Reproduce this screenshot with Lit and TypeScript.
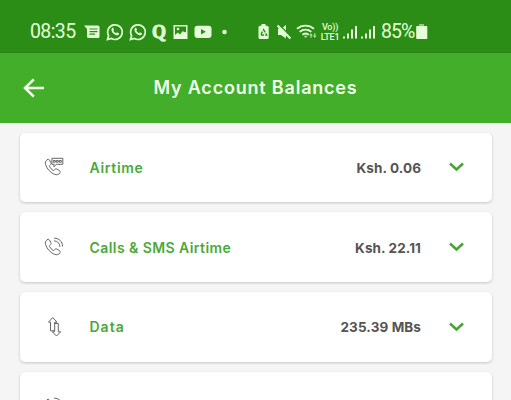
import { LitElement, html, css, svg, nothing } from "lit";
import { customElement } from "lit/decorators.js";
import { styleMap } from "lit/directives/style-map.js";

const phone = svg`<path d="M3.400 2.600C1.600 3.800.9 5.400 1.600 7.600c1.500 4.500 4.600 7.900 8.900 9.700 2.200.9 4.300.4 5.500-1.500.5-.8.3-1.500-.4-2l-2.600-1.700c-.7-.5-1.500-.4-2 .3l-.6.8c-.4.5-.9.5-1.400.2-1.500-1-2.700-2.300-3.500-3.900-.3-.6-.1-1 .4-1.400l.6-.5c.6-.5.8-1.100.4-1.800L5.500 3C5 2.200 4.200 2.100 3.400 2.600Z"/>`;

const rowIcons = {
  chat: svg`${phone}
    <path d="M8.300 1.300h10.500v6h-6.600L10 9.800V7.300H8.300Z" fill="#fff"/>
    <path d="M9.800 3.500h1.500v1.700H9.800Zm3 0h1.500v1.700h-1.500Zm3 0h1.500v1.700h-1.500Z"/>`,
  call: svg`${phone}
    <path d="M10.500 1.200c4.600 0 8 3.300 8.100 8M10.400 3.900c3.200.1 5.400 2.300 5.500 5.500"/>`,
  data: svg`<path d="M8.500.8 4.500 5.200h2v8.600h4.200V5.200h1.900Z"/>
    <path d="M10.700 6.500h3.600v8.300h2.400l-4.200 4.200-4.100-4.200h2V13.800"/>`,
};
type RowIcon = keyof typeof rowIcons;

@customElement("status-bar")
class StatusBar extends LitElement {
  static styles = css`
    :host {
      display: flex;
      align-items: center;
      flex: none;
      height: 53px;
      padding: 11px 0 0 30px;
      box-sizing: border-box;
      background: #2b8d15;
      color: #e4ffd8;
      font: 19.500px/24px Roboto, sans-serif;
      border-bottom: 1px solid #2b8319;
    }
    svg {
      display: block;
      flex: none;
      height: 18px;
      fill: currentColor;
    }
    .line { fill: none; stroke: currentColor; }
    .cut { fill: #2b8d15; }
    .etch { fill: none; stroke: #2b8d15; }
    .time { width: 54px; letter-spacing: -0.6px; white-space: nowrap; }
    .left { display: flex; align-items: center; gap: 6px; width: 174px; }
    .q { font: bold 18px/18px "Liberation Serif", serif; width: 15px; -webkit-text-stroke: 0.9px currentColor; }
    .right { display: flex; align-items: center; }
    .lte {
      display: flex;
      flex-direction: column;
      align-items: center;
      font: 500 9px/10px Roboto, sans-serif;
      width: 22px;
      white-space: nowrap;
      letter-spacing: -0.2px;
    }
    .lte span { display: block; height: 10px; }
    .signal { margin-left: 2px; }
    .pct { width: 35px; margin-left: 4px; letter-spacing: -1px; white-space: nowrap; }
  `;

  private whatsapp() {
    return svg`<path class="line" stroke-width="1.700" d="M1.500 16.600 2.600 12.700a7.300 7.300 0 1 1 2.800 2.800Z"/>
      <path d="M6.100 4.900c.5-.4 1-.3 1.200.2l.6 1.400c.2.4-.5 1-.6 1.300.7 1.300 1.600 2 2.800 2.500.4-.2.800-1.100 1.200-.9l1.500.8c.6.3-.1 1.600-.7 1.900-1.200.6-3.100-.1-4.700-1.600C5.500 8.700 4.700 6.200 6.100 4.900Z"/>`;
  }

  private bars() {
    return html`<svg class="signal" width="16" viewBox="0 0 16 18">
      <path d="M0 13.500h2v2H0Zm4-3h2v5H4Zm4-4h2v9H8Zm4-3.500h2v12.500h-2Z" />
    </svg>`;
  }

  render() {
    return html`
      <div class="time">08:35</div>
      <div class="left">
        <svg width="16" viewBox="0 0 16 18">
          <path d="M0 2.500h14q1.500 0 1.500 1.500v9.500q0 1.500-1.500 1.500H4.500Q3 15 3 13.500V6Z" />
          <path class="etch" stroke-width="1.200" d="M5.500 6h8M5.500 8.600h8M5.500 11.200h5.500" />
        </svg>
        <svg width="17" viewBox="0 0 17 18">${this.whatsapp()}</svg>
        <svg width="17" viewBox="0 0 17 18">${this.whatsapp()}</svg>
        <div class="q">Q</div>
        <svg width="15" viewBox="0 0 15 18">
          <path d="M.5 2h14v14H.5Z" />
          <path class="cut" d="M2 3.500h11v6L9.500 8.200 7 11.400 4.800 9.500 2 12.100Z" />
          <circle cx="5" cy="6" r="1.300" />
        </svg>
        <svg width="18" viewBox="0 0 18 18">
          <rect x=".5" y="2.700" width="17" height="12.300" rx="3" />
          <path class="cut" d="M7 6v5.600l4.800-2.800Z" />
        </svg>
        <svg width="16" viewBox="0 0 16 18"><circle cx="6.500" cy="9" r="2.300" /></svg>
      </div>
      <div class="right">
        <svg width="12" viewBox="0 0 12 18">
          <path d="M3.500 1h4v1.800H9q1.700 0 1.700 1.500v10.200q0 1.500-1.700 1.500H2q-1.500 0-1.500-1.500V4.300q0-1.500 1.500-1.500h1.500Z" />
          <path class="etch" stroke-width="1.300" stroke-dasharray="3.200 1.200" d="M5.600 6.600 8.700 12H2.500Z" />
        </svg>
        <svg width="22" viewBox="0 0 22 18">
          <path d="M8 5.500h3.500L16 2v13.500L11 12H8Z" />
          <path class="etch" stroke-width="1.500" d="M9 1.500 22 14.500" />
          <path class="line" stroke-width="2" d="M7.500 2.500 20.500 15.500" />
        </svg>
        <svg width="27" viewBox="1 0 27 18">
          <path class="line" stroke-width="1.900" d="M6 5.800c5-4.300 12-4.300 17 0M8.700 8.900c3.500-3 8.100-3 11.600 0M11.500 11.700c1.800-1.500 4.400-1.500 6.200 0" />
          <path d="M12.900 13.200q1.700-1.300 3.400 0L14.600 15ZM20 10.200l2 2.300h-1.300v2.300h-1.300v-2.300H18Zm3.700 4.800-1.800-2.300h1.200v-2.400h1.300v2.400h1.200Z" opacity=".7" />
        </svg>
        <div class="lte"><span>Vo))</span><span>LTE1</span></div>
        ${this.bars()}${this.bars()}
        <div class="pct">85%</div>
        <svg width="12" viewBox="0 0 12 18">
          <path d="M3 1h5v2H3Z" opacity=".55" />
          <path d="M1 3h9.500q.8 0 .8.800v11.400q0 .8-.8.800H1q-.8 0-.8-.8V3.800Q.2 3 1 3Z" />
        </svg>
      </div>
    `;
  }
}

@customElement("balance-row")
class BalanceRow extends LitElement {
  static properties = {
    label: { type: String },
    amount: { type: String },
    icon: { type: String },
    tracking: { type: Number },
  };
  declare label: string;
  declare amount: string;
  declare icon: RowIcon;
  declare tracking: number;

  static styles = css`
    :host {
      display: flex;
      align-items: center;
      flex: none;
      height: 69.500px;
      padding: 0 27px 0 24px;
      box-sizing: border-box;
      background: #fff;
      border-radius: 5px;
      box-shadow: 0 1px 3px rgba(0, 0, 0, 0.2);
      font: 600 14px/20px Inter, sans-serif;
    }
    svg { display: block; flex: none; fill: none; }
    .icon { stroke: #666; stroke-width: 1; stroke-linejoin: round; stroke-linecap: round; }
    .label { flex: 1; margin: 1px 0 0 25.500px; color: #4aa93a; white-space: nowrap; }
    .amount { margin-top: 1px; color: #555; font-weight: 700; font-size: 13.500px; letter-spacing: 0.1px; white-space: nowrap; }
    .chevron { margin-left: 28px; stroke: #43a535; stroke-width: 2.500; }
  `;

  render() {
    return html`
      <svg class="icon" width="20" height="20" viewBox="0 0 20 20">${rowIcons[this.icon]}</svg>
      <div class="label" style=${styleMap({ letterSpacing: `${this.tracking ?? 0}px` })}>${this.label ?? nothing}</div>
      <div class="amount">${this.amount ?? nothing}</div>
      <svg class="chevron" width="16" height="10" viewBox="0 0 16 10"><path d="m1 1.500 6.500 6 6.500-6" /></svg>
    `;
  }
}

@customElement("app-root")
class AppRoot extends LitElement {
  static styles = css`
    :host {
      display: flex;
      flex-direction: column;
      height: 400px;
      overflow: hidden;
      background: #f5f5f5;
    }
    header {
      display: grid;
      grid-template-columns: 68px 1fr 68px;
      align-items: center;
      flex: none;
      height: 70px;
      background: #43ae2a;
      color: #efffea;
    }
    .back { margin-left: 23px; fill: none; stroke: #f4fff0; stroke-width: 2.600; }
    h1 {
      margin: 0;
      text-align: center;
      font: 600 18px/24px Inter, sans-serif;
      letter-spacing: 0.8px;
      white-space: nowrap;
    }
    main {
      display: flex;
      flex-direction: column;
      gap: 10.200px;
      padding: 9.700px 19px 0 20px;
    }
  `;

  render() {
    return html`
      <status-bar></status-bar>
      <header>
        <svg class="back" width="22" height="20" viewBox="0 0 22 20"><path d="M10.800 1.300 2 10l8.800 8.700M2 10h19" /></svg>
        <h1>My Account Balances</h1>
      </header>
      <main>
        <balance-row icon="chat" label="Airtime" amount="Ksh. 0.06" tracking="0.7"></balance-row>
        <balance-row icon="call" label="Calls &amp; SMS Airtime" amount="Ksh. 22.11" tracking="0.43"></balance-row>
        <balance-row icon="data" label="Data" amount="235.39 MBs" tracking="1"></balance-row>
        <balance-row icon="call"></balance-row>
      </main>
    `;
  }
}
